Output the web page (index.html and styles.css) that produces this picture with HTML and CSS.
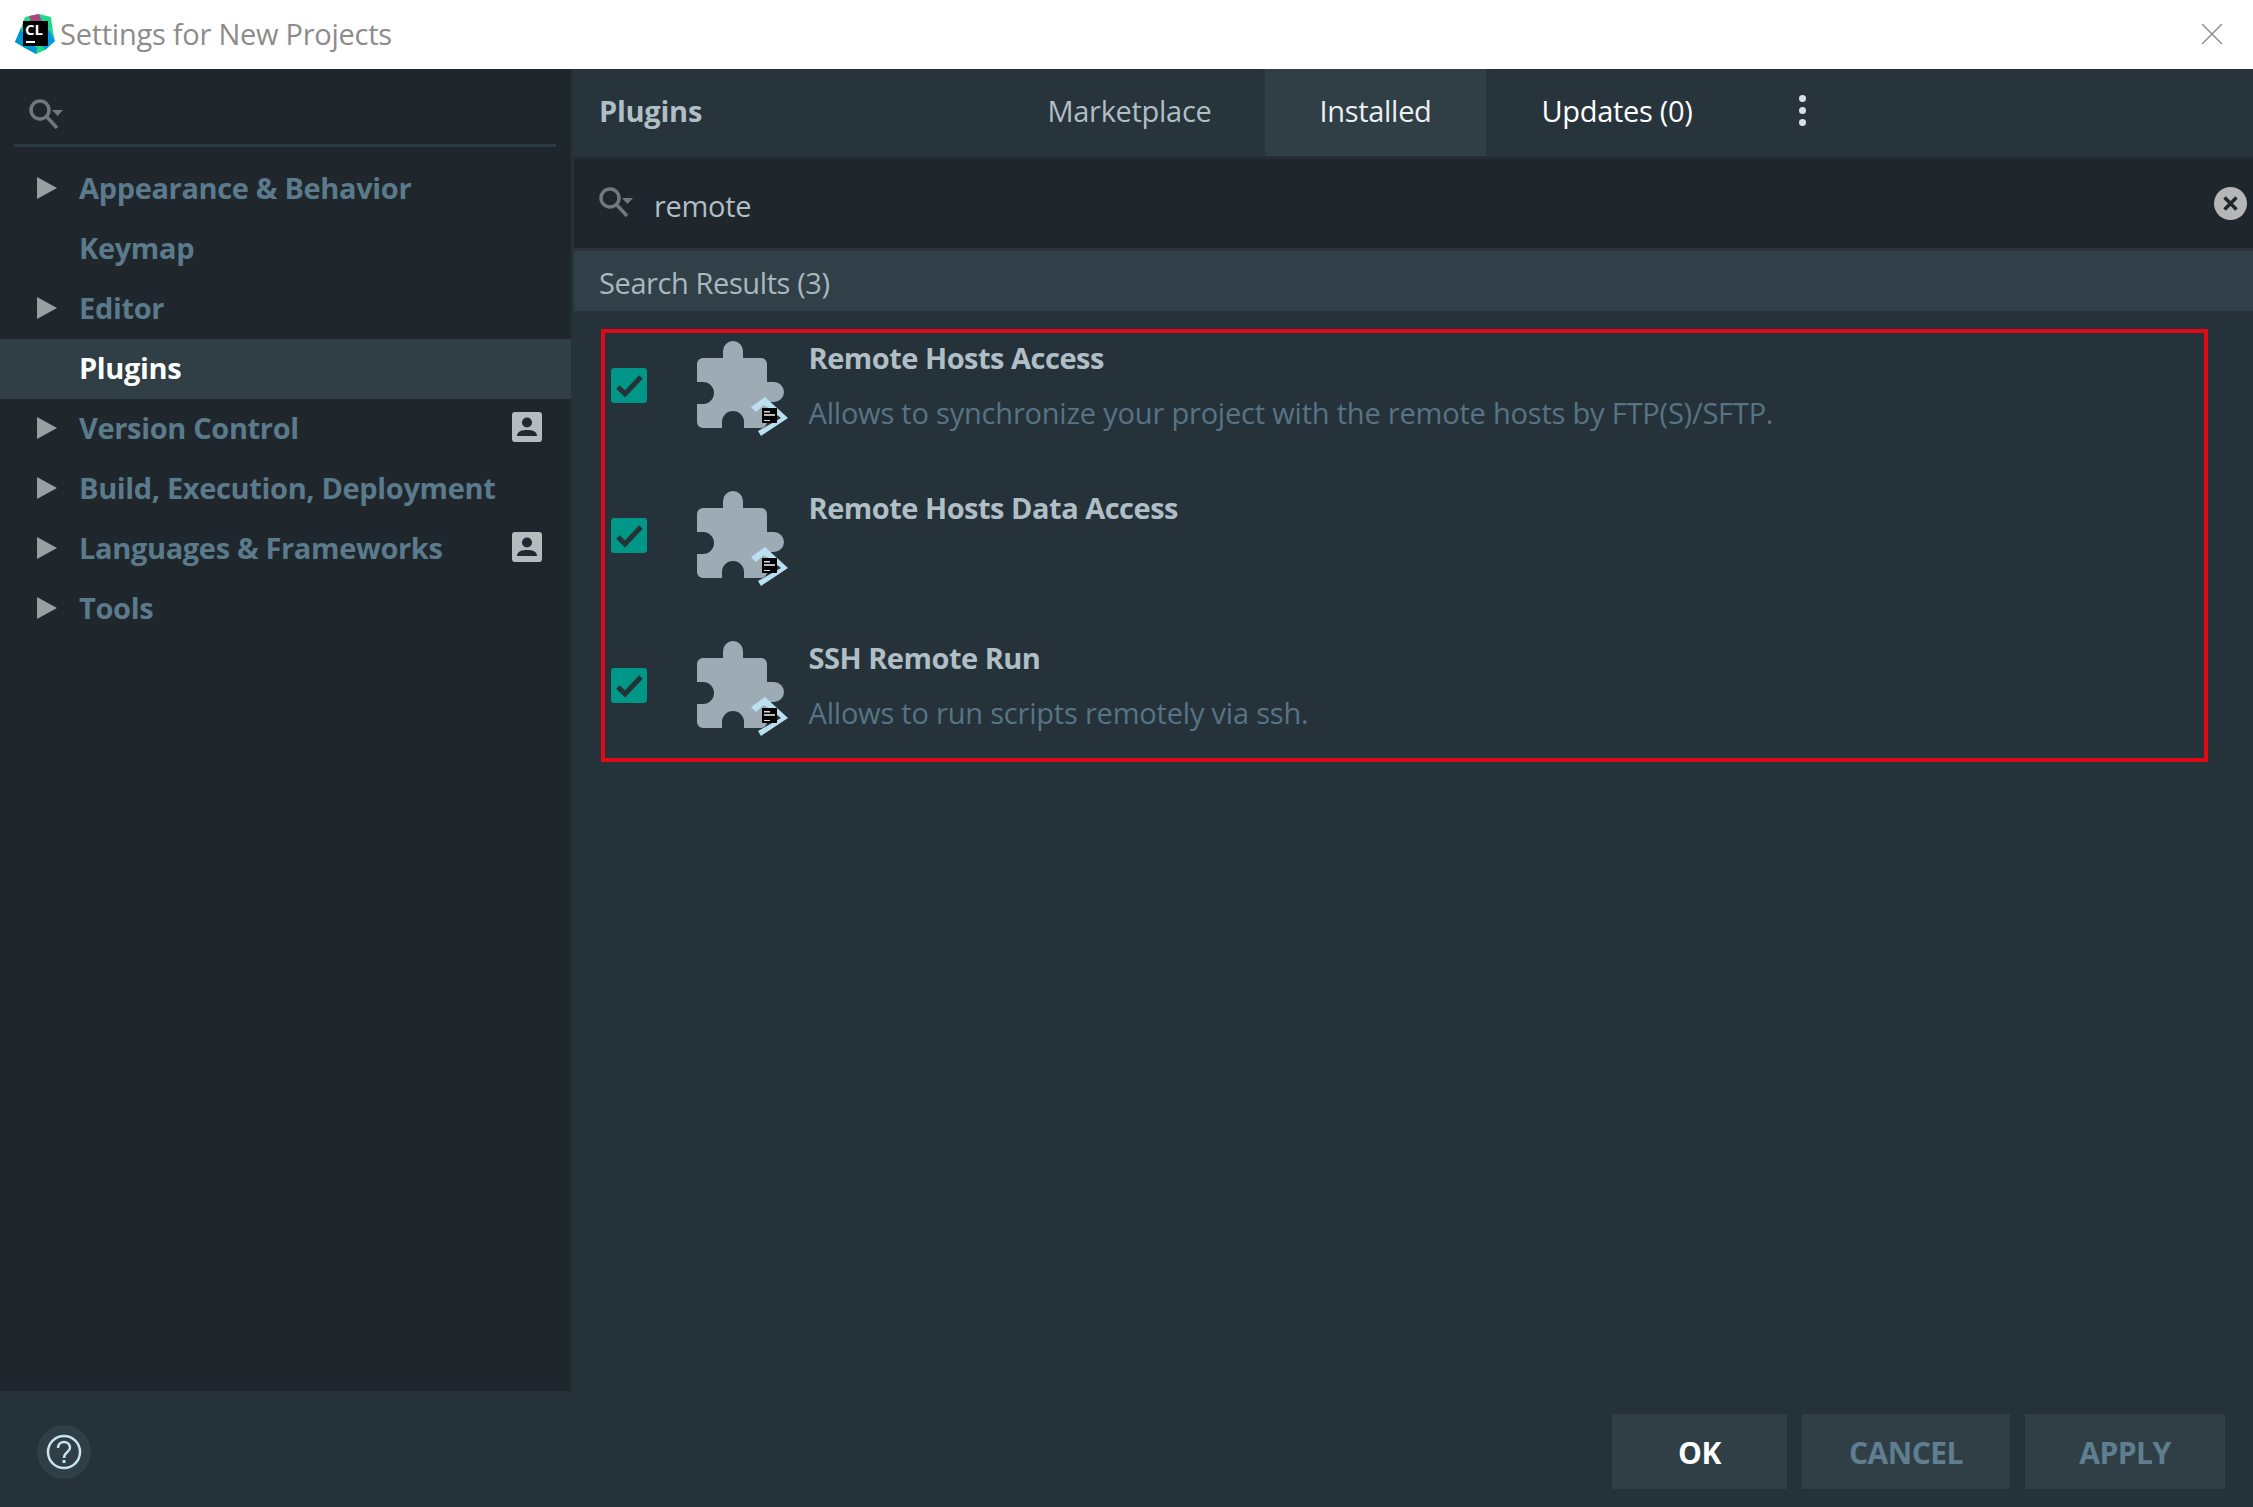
FILE: index.html
```html
<!DOCTYPE html>
<html lang="en">
<head>
<meta charset="utf-8">
<title>Settings for New Projects</title>
<link rel="stylesheet" href="styles.css">
</head>
<body>
<svg class="defs" width="0" height="0" aria-hidden="true">
  <symbol id="search" viewBox="0 0 34 30">
    <circle cx="11" cy="11" r="9" fill="none" stroke="currentColor" stroke-width="3.500"/>
    <path d="M17 17 L28 29" fill="none" stroke="currentColor" stroke-width="3.500"/>
    <path d="M23 11 H34 L28.500 17 Z" fill="currentColor"/>
  </symbol>
  <symbol id="arrow" viewBox="0 0 20 22"><path d="M0 0 L20 11 L0 22 Z" fill="#9a9fa1"/></symbol>
  <symbol id="person" viewBox="0 0 30 30">
    <rect width="30" height="30" rx="3" fill="#b6bbbd"/>
    <circle cx="15" cy="10.500" r="5" fill="#212930"/>
    <path d="M5 24 C5 19 10 18 15 18 C20 18 25 19 25 24 Z" fill="#212930"/>
  </symbol>
  <symbol id="plugin" viewBox="0 0 120 120">
    <path fill="#9cabb4" d="M23 28 H43 V21 a10 10 0 0 1 20 0 V28 H81 a6 6 0 0 1 6 6 V52 h7 a10 10 0 0 1 0 20 h-7 V92 a6 6 0 0 1 -6 6 H64 V92 a11 11 0 0 0 -22 0 V98 H23 a6 6 0 0 1 -6 -6 V74 h6 a11 11 0 0 0 0 -22 h-6 V34 a6 6 0 0 1 6 -6 Z"/>
    <path fill="#b9dff0" d="M71 77 L85 67 L108 88 L81 106 L78 101 L101 88 L84 75 L76 82 Z"/>
    <rect x="82" y="78" width="15" height="15" fill="#000"/>
    <rect x="84" y="81" width="6" height="1.500" fill="#ddd"/>
    <rect x="84" y="84" width="11" height="2" fill="#bbb"/>
    <rect x="84" y="90" width="6" height="1" fill="#ddd"/>
  </symbol>
</svg>

<div class="window">
  <header class="titlebar">
    <svg class="logo" viewBox="0 0 40 40" width="40" height="40" aria-hidden="true">
      <polygon points="10,3 24,0 36,3 38,18 40,27 30,36 21,40 10,34 0,28 6,14" fill="#21d789"/>
      <polygon points="0,28 6,14 10,24 22,34 21,40 10,34" fill="#0095d5"/>
      <polygon points="30,36 40,27 34,16 26,30" fill="#009ae5"/>
      <polygon points="14,2 24,0 27,8 16,8" fill="#a8487e"/>
      <rect x="8" y="7" width="25" height="25" fill="#000"/>
      <text class="logo-text" x="10" y="21">CL</text>
      <rect x="11" y="27" width="9" height="2" fill="#fff"/>
    </svg>
    <span class="title-text">Settings for New Projects</span>
    <svg class="close" viewBox="0 0 20 20" width="20" height="20" aria-hidden="true">
      <path d="M0 0 L20 20 M20 0 L0 20" stroke="#8f8f8f" stroke-width="1.500" fill="none"/>
    </svg>
  </header>

  <div class="body">
    <aside class="sidebar">
      <div class="side-search">
        <svg class="search-icon" aria-hidden="true"><use href="#search"/></svg>
      </div>
      <ul class="tree">
        <li class="item"><svg class="arrow" aria-hidden="true"><use href="#arrow"/></svg><span>Appearance &amp; Behavior</span></li>
        <li class="item leaf"><span>Keymap</span></li>
        <li class="item"><svg class="arrow" aria-hidden="true"><use href="#arrow"/></svg><span>Editor</span></li>
        <li class="item leaf selected"><span>Plugins</span></li>
        <li class="item"><svg class="arrow" aria-hidden="true"><use href="#arrow"/></svg><span>Version Control</span><svg class="person" aria-hidden="true"><use href="#person"/></svg></li>
        <li class="item"><svg class="arrow" aria-hidden="true"><use href="#arrow"/></svg><span>Build, Execution, Deployment</span></li>
        <li class="item"><svg class="arrow" aria-hidden="true"><use href="#arrow"/></svg><span>Languages &amp; Frameworks</span><svg class="person" aria-hidden="true"><use href="#person"/></svg></li>
        <li class="item"><svg class="arrow" aria-hidden="true"><use href="#arrow"/></svg><span>Tools</span></li>
      </ul>
    </aside>

    <main class="main">
      <div class="tabs">
        <h1 class="tabs-title">Plugins</h1>
        <div class="tab marketplace">Marketplace</div>
        <div class="tab installed">Installed</div>
        <div class="tab updates">Updates (0)</div>
        <div class="dots"><i></i><i></i><i></i></div>
      </div>

      <div class="search">
        <svg class="search-icon" aria-hidden="true"><use href="#search"/></svg>
        <span class="query">remote</span>
        <svg class="clear" viewBox="0 0 33 33" width="33" height="33" aria-hidden="true">
          <circle cx="16.500" cy="16.500" r="16.500" fill="#b4b6b8"/>
          <path d="M10.500 10.500 L22.500 22.500 M22.500 10.500 L10.500 22.500" stroke="#1f272d" stroke-width="3.500"/>
        </svg>
      </div>

      <div class="results-head">Search Results (3)</div>

      <section class="results">
        <article class="plugin">
          <span class="check"><svg viewBox="0 0 36 35" width="36" height="35" aria-hidden="true"><path d="M7 19 L14 26 L30 9" fill="none" stroke="#263238" stroke-width="5"/></svg></span>
          <svg class="plugin-icon" aria-hidden="true"><use href="#plugin"/></svg>
          <div class="plugin-text">
            <h2>Remote Hosts Access</h2>
            <p>Allows to synchronize your project with the remote hosts by FTP(S)/SFTP.</p>
          </div>
        </article>
        <article class="plugin">
          <span class="check"><svg viewBox="0 0 36 35" width="36" height="35" aria-hidden="true"><path d="M7 19 L14 26 L30 9" fill="none" stroke="#263238" stroke-width="5"/></svg></span>
          <svg class="plugin-icon" aria-hidden="true"><use href="#plugin"/></svg>
          <div class="plugin-text">
            <h2>Remote Hosts Data Access</h2>
          </div>
        </article>
        <article class="plugin">
          <span class="check"><svg viewBox="0 0 36 35" width="36" height="35" aria-hidden="true"><path d="M7 19 L14 26 L30 9" fill="none" stroke="#263238" stroke-width="5"/></svg></span>
          <svg class="plugin-icon" aria-hidden="true"><use href="#plugin"/></svg>
          <div class="plugin-text">
            <h2>SSH Remote Run</h2>
            <p>Allows to run scripts remotely via ssh.</p>
          </div>
        </article>
      </section>
    </main>
  </div>

  <footer class="footer">
    <span class="help">
      <svg viewBox="0 0 54 54" width="54" height="54" aria-hidden="true">
        <circle cx="27" cy="27" r="16" fill="none" stroke="#c5e4f3" stroke-width="2.500"/>
        <path d="M21 23 C21 15 33 15 33 23 C33 27 27 27 27 33" fill="none" stroke="#c5e4f3" stroke-width="2.500"/>
        <rect x="25.500" y="35" width="3" height="3" fill="#c5e4f3"/>
      </svg>
    </span>
    <div class="buttons">
      <button class="btn primary">OK</button>
      <button class="btn cancel">CANCEL</button>
      <button class="btn apply">APPLY</button>
    </div>
  </footer>
</div>
</body>
</html>
```

FILE: styles.css
```css
* { box-sizing: border-box; }
html, body { margin: 0; height: 100%; overflow: hidden; }
body { background: #25323a; font-family: "Open Sans", "Noto Sans", sans-serif; }
.defs { position: absolute; }
h1, h2, p, ul { margin: 0; padding: 0; list-style: none; }

.window { display: flex; flex-direction: column; height: 1507px; }

.titlebar { height: 69px; flex: none; background: #fff; display: flex; align-items: center; padding: 0 31px 2px 15px; }
.logo { flex: none; margin-right: 5px; }
.logo-text { font: 700 15px "Open Sans", sans-serif; fill: #fff; }
.title-text { font-size: 29px; color: #8c8c8c; font-weight: 400; letter-spacing: -0.25px; }
.close { margin-left: auto; }

.body { flex: 1; display: flex; min-height: 0; }

.sidebar { width: 571px; flex: none; background: #1f272d; }
.main { flex: 1; min-width: 0; margin-left: 3px; display: flex; flex-direction: column; }

.side-search { height: 90px; padding: 30px 14px 0 15px; }
.side-search .search-icon { display: block; margin-left: 14px; }
.side-search::after { content: ""; display: block; height: 3px; margin: 15px 1px 0 -1px; background: #2e3a41; }
.search-icon { width: 34px; height: 30px; color: #73787b; flex: none; }

.item { height: 60px; display: flex; align-items: center; padding: 0 29px 2px 37px; font-size: 29px; font-weight: 700; color: #5b7a8b; letter-spacing: -0.35px; }
.item span { margin-bottom: 2px; }
.item.leaf { padding-left: 79px; }
.item.selected { background: #303e45; color: #fff; }
.arrow { width: 20px; height: 22px; margin-right: 22px; flex: none; }
.person { width: 30px; height: 30px; margin: 0 0 2px auto; flex: none; }

.tabs { height: 90px; flex: none; display: flex; align-items: stretch; padding-left: 25px; border-bottom: 3px solid #242f35; background: #28343b; font-size: 29px; }
.tabs-title { font-size: 29px; font-weight: 700; color: #b0bec5; width: 395px; letter-spacing: -0.25px; line-height: 84px; }
.tab { display: flex; align-items: center; justify-content: center; color: #b0bec5; letter-spacing: -0.3px; padding-bottom: 4px; }
.marketplace { width: 271px; }
.installed { width: 221px; background: #303e45; color: #eceff1; }
.updates { width: 262px; color: #fff; }
.dots { width: 110px; display: flex; flex-direction: column; align-items: center; justify-content: center; gap: 5px; padding: 0 1px 5px 0; }
.dots i { width: 7px; height: 7px; border-radius: 50%; background: #d9dfe2; }

.search { height: 92px; flex: none; display: flex; align-items: center; padding: 0 6px 3px 25px; background: #1f272d; border-bottom: 3px solid #293339; }
.query { margin: 6px 0 0 21px; font-size: 29px; color: #b0bec5; letter-spacing: -0.3px; }
.clear { margin: 2px 0 0 auto; }

.results-head { height: 60px; flex: none; display: flex; align-items: center; padding: 3px 0 0 25px; background: #314048; color: #a9b8bf; font-size: 29px; letter-spacing: -0.4px; }

.results { margin: 18px 0 0 27px; width: 1607px; height: 433px; border: 4.500px solid #e00a16; padding-top: 4px; display: flex; flex-direction: column; gap: 25px; }
.plugin { height: 125px; flex: none; display: flex; align-items: flex-start; }
.check { width: 36px; height: 35px; margin: 31px 0 0 6px; background: #009688; border-radius: 3px; flex: none; }
.check svg { display: block; }
.plugin-icon { width: 120px; height: 120px; margin: -7.500px 0 0 32.500px; flex: none; }
.plugin-text { margin-left: 9px; }
.plugin-text h2 { font-size: 29px; font-weight: 700; color: #b0bec5; letter-spacing: -0.5px; line-height: 40px; margin-top: 1px; }
.plugin-text p { font-size: 29px; color: #587484; letter-spacing: -0.2px; line-height: 40px; margin-top: 15px; }

.footer { height: 116px; flex: none; display: flex; align-items: flex-start; background: #25323a; padding: 23px 28px 0 37px; }
.help { width: 54px; height: 54px; margin-top: 11px; background: #303e45; border-radius: 50%; }
.help svg { display: block; }
.buttons { margin-left: auto; display: flex; gap: 15px; }
.btn { height: 75px; padding: 2px 0 0; border: 0; background: #303f46; color: #5f7f91; font: 700 30px "Open Sans", sans-serif; letter-spacing: -0.5px; }
.primary { width: 175px; color: #fff; }
.cancel { width: 208px; }
.apply { width: 200px; }
```
